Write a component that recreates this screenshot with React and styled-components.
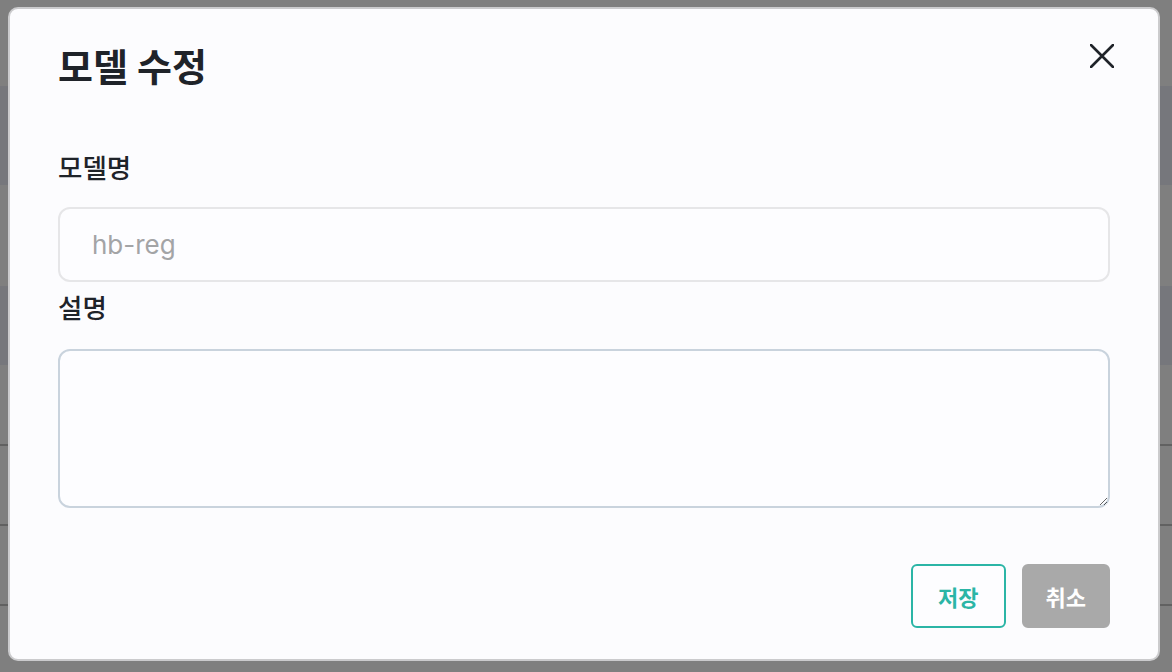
import React from 'react'
import styled, { createGlobalStyle } from 'styled-components'

const Global = createGlobalStyle`
  html, body { margin: 0; padding: 0; }
  body {
    font-family: Inter, "Noto Sans CJK KR", sans-serif;
    background: #ffffff;
    overflow: hidden;
  }
`

// page behind the dimmed overlay
const Page = styled.div`
  height: 100vh;
  display: flex;
  flex-direction: column;
`

const Band = styled.div`
  height: ${({ h }) => h}px;
  flex-shrink: 0;
  background: ${({ tint }) => (tint ? '#eceff8' : '#ffffff')};
  border-bottom: ${({ line }) => (line ? '2px solid #c2c2c2' : 'none')};
  box-sizing: border-box;
`

const Overlay = styled.div`
  position: fixed;
  inset: 0;
  background: rgba(0, 0, 0, 0.5);
  display: flex;
  padding: 7px 12px 11px 8px;
  box-sizing: border-box;
`

const Modal = styled.div`
  flex: 1;
  display: flex;
  flex-direction: column;
  background: #fcfcfe;
  border: 2px solid #cbcbcd;
  border-radius: 10px;
  padding: 36px 48px 31px 48px;
  box-sizing: border-box;
`

const Head = styled.div`
  display: flex;
  justify-content: space-between;
  align-items: flex-start;
`

const Title = styled.h2`
  margin: 0;
  font-size: 38px;
  line-height: 1.2;
  font-weight: 700;
  color: #1f2329;
`

const Close = styled.button`
  border: 0;
  background: none;
  padding: 0;
  margin-top: -1px;
  margin-right: -4px;
  width: 24px;
  height: 24px;
  cursor: pointer;
  display: flex;
`

const Label = styled.label`
  display: block;
  font-size: 26.5px;
  line-height: 1.2;
  font-weight: 500;
  color: #1f2329;
  margin-top: ${({ top }) => top}px;
  margin-bottom: ${({ gap }) => gap}px;
`

const Input = styled.input`
  display: block;
  width: 100%;
  height: 75px;
  box-sizing: border-box;
  border: 2px solid #e6e6e8;
  border-radius: 12px;
  background: #fdfdff;
  padding: 0 32px;
  font-family: Inter, "Noto Sans CJK KR", sans-serif;
  font-size: 26px;
  color: #1f2329;
  outline: none;
  &::placeholder { color: #a3a4a6; }
`

const TextArea = styled.textarea`
  display: block;
  width: 100%;
  height: 160px;
  box-sizing: border-box;
  border: 2px solid #c9d3dd;
  border-radius: 12px;
  background: #fdfdff;
  padding: 16px 32px;
  font-family: Inter, "Noto Sans CJK KR", sans-serif;
  font-size: 24px;
  outline: none;
`

const Actions = styled.div`
  display: flex;
  justify-content: flex-end;
  gap: 16px;
  margin-top: 56px;
`

const Button = styled.button`
  height: 64px;
  padding: 0 ${({ wide }) => (wide ? 25 : 22)}px;
  border-radius: 6px;
  box-sizing: border-box;
  font-family: Inter, "Noto Sans CJK KR", sans-serif;
  font-size: 22px;
  font-weight: 700;
  cursor: pointer;
  border: 2px solid ${({ primary }) => (primary ? '#2bb5a6' : '#a9a9a9')};
  background: ${({ primary }) => (primary ? '#fdfdff' : '#a9a9a9')};
  color: ${({ primary }) => (primary ? '#2bb5a6' : '#ffffff')};
`

const XIcon = () => (
  <svg width="24" height="24" viewBox="0 0 24 24" fill="none">
    <path d="M1 1L23 23M23 1L1 23" stroke="#1f2329" strokeWidth="2.6" strokeLinecap="round" />
  </svg>
)

export default function App() {
  return (
    <>
      <Global />
      <Page>
        <Band h={86} />
        <Band h={99} tint />
        <Band h={101} />
        <Band h={79} tint />
        <Band h={81} line />
        <Band h={80} line />
        <Band h={80} line />
        <Band h={80} />
      </Page>
      <Overlay>
        <Modal>
          <Head>
            <Title>모델 수정</Title>
            <Close aria-label="닫기">
              <XIcon />
            </Close>
          </Head>
          <Label top={62} gap={23}>모델명</Label>
          <Input placeholder="hb-reg" />
          <Label top={11} gap={25}>설명</Label>
          <TextArea />
          <Actions>
            <Button primary wide>저장</Button>
            <Button>취소</Button>
          </Actions>
        </Modal>
      </Overlay>
    </>
  )
}
